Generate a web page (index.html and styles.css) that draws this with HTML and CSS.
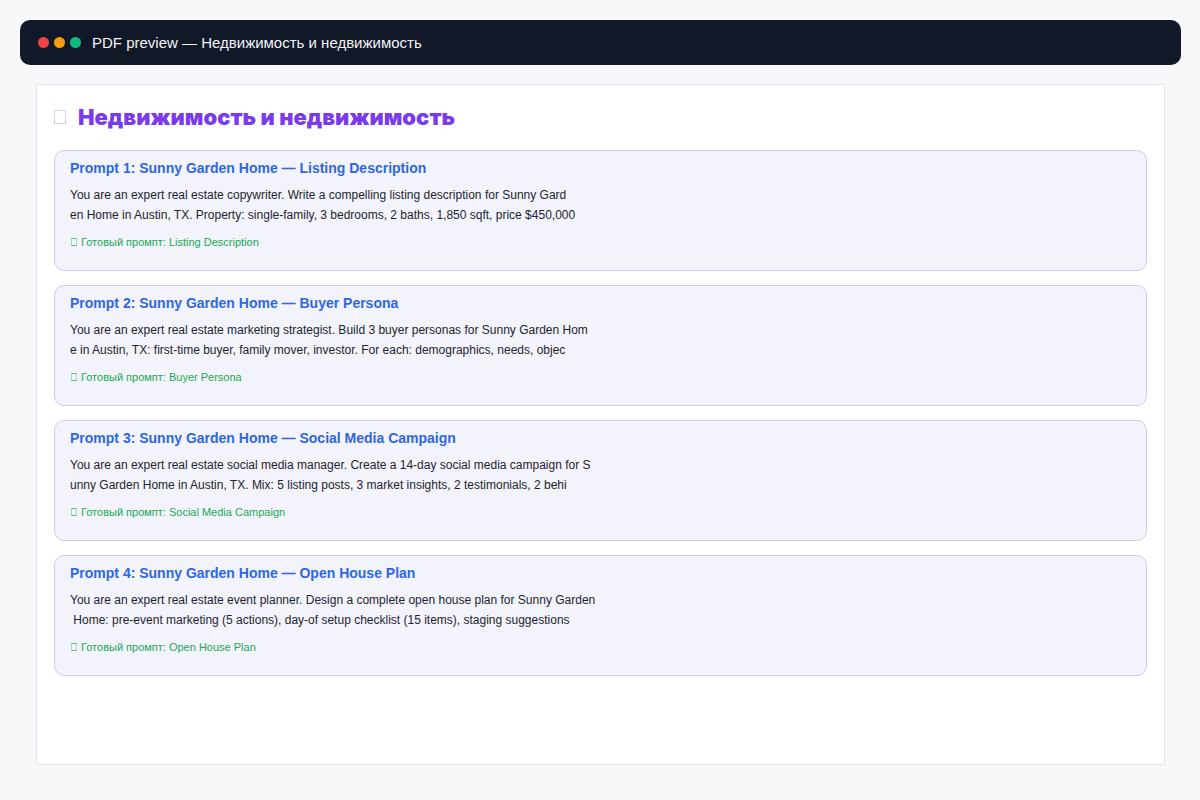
FILE: index.html
```html
<!DOCTYPE html>
<html lang="ru">
<head>
    <meta charset="UTF-8">
    <meta name="viewport" content="width=device-width, initial-scale=1.0">
    <title>PDF preview — Недвижимость и недвижимость</title>
    <link rel="stylesheet" href="styles.css">
</head>
<body>

    <header class="titlebar">
        <span class="dot dot-red"></span>
        <span class="dot dot-yellow"></span>
        <span class="dot dot-green"></span>
        <span class="titlebar-text">PDF preview — Недвижимость и недвижимость</span>
    </header>

    <main class="page">
        <h1 class="page-title"><span class="glyph"></span>Недвижимость и недвижимость</h1>

        <section class="prompt">
            <h2>Prompt 1: Sunny Garden Home — Listing Description</h2>
            <p class="prompt-text">You are an expert real estate copywriter. Write a compelling listing description for Sunny Gard
en Home in Austin, TX. Property: single-family, 3 bedrooms, 2 baths, 1,850 sqft, price $450,000</p>
            <p class="prompt-ready"><span class="glyph"></span>Готовый промпт: Listing Description</p>
        </section>

        <section class="prompt">
            <h2>Prompt 2: Sunny Garden Home — Buyer Persona</h2>
            <p class="prompt-text">You are an expert real estate marketing strategist. Build 3 buyer personas for Sunny Garden Hom
e in Austin, TX: first-time buyer, family mover, investor. For each: demographics, needs, objec</p>
            <p class="prompt-ready"><span class="glyph"></span>Готовый промпт: Buyer Persona</p>
        </section>

        <section class="prompt">
            <h2>Prompt 3: Sunny Garden Home — Social Media Campaign</h2>
            <p class="prompt-text">You are an expert real estate social media manager. Create a 14-day social media campaign for S
unny Garden Home in Austin, TX. Mix: 5 listing posts, 3 market insights, 2 testimonials, 2 behi</p>
            <p class="prompt-ready"><span class="glyph"></span>Готовый промпт: Social Media Campaign</p>
        </section>

        <section class="prompt">
            <h2>Prompt 4: Sunny Garden Home — Open House Plan</h2>
            <p class="prompt-text">You are an expert real estate event planner. Design a complete open house plan for Sunny Garden
 Home: pre-event marketing (5 actions), day-of setup checklist (15 items), staging suggestions</p>
            <p class="prompt-ready"><span class="glyph"></span>Готовый промпт: Open House Plan</p>
        </section>
    </main>

</body>
</html>
```

FILE: styles.css
```css
* {
    box-sizing: border-box;
}

body {
    font-family: Arial, "Liberation Sans", sans-serif;
    margin: 0;
    padding: 20px 19px 35px 20px;
    min-height: 100vh;
    display: flex;
    flex-direction: column;
    background-color: #f6f8fa;
    color: #1f2430;
}

/* window bar */
.titlebar {
    display: flex;
    align-items: center;
    gap: 5px;
    padding: 0 18px;
    height: 45px;
    background-color: #111827;
    border-radius: 10px;
}

.dot {
    width: 11px;
    height: 11px;
    border-radius: 50%;
}

.dot-red {
    background-color: #ef4444;
}

.dot-yellow {
    background-color: #f59e0b;
}

.dot-green {
    background-color: #10b981;
}

.titlebar-text {
    margin-left: 6px;
    color: #f3f4f6;
    font-size: 15px;
}

/* sheet */
.page {
    flex: 1;
    margin: 19px 16px 0;
    padding: 16px 17px;
    background-color: white;
    border: 1px solid #e2e5ec;
}

.page-title {
    display: flex;
    align-items: center;
    gap: 12px;
    margin: 0 0 17px;
    font-family: "Arial Black", Inter, sans-serif;
    font-size: 22px;
    font-weight: 900;
    line-height: 32px;
    color: #7c3aed;
}

/* empty box in place of the emoji */
.glyph {
    display: inline-block;
    border: 1px solid currentColor;
}

.page-title .glyph {
    width: 12px;
    height: 14px;
    border-color: #d9caf7;
}

/* prompt cards */
.prompt {
    margin-bottom: 14px;
    padding: 8px 15px 19px;
    background-color: #f2f3fb;
    border: 1px solid #cdcdea;
    border-radius: 10px;
}

.prompt h2 {
    margin: 0 0 8px;
    font-size: 14px;
    line-height: 18px;
    color: #2f67e2;
}

.prompt-text {
    margin: 0;
    font-size: 12px;
    line-height: 20px;
    white-space: pre-wrap;
}

.prompt-ready {
    display: flex;
    align-items: center;
    gap: 4px;
    margin: 8px 0 0;
    font-size: 11px;
    line-height: 18px;
    color: #22a855;
}

.prompt-ready .glyph {
    width: 6px;
    height: 8px;
    margin-left: 1px;
    border-color: #5cbf83 #a5dbbb;
}
```
